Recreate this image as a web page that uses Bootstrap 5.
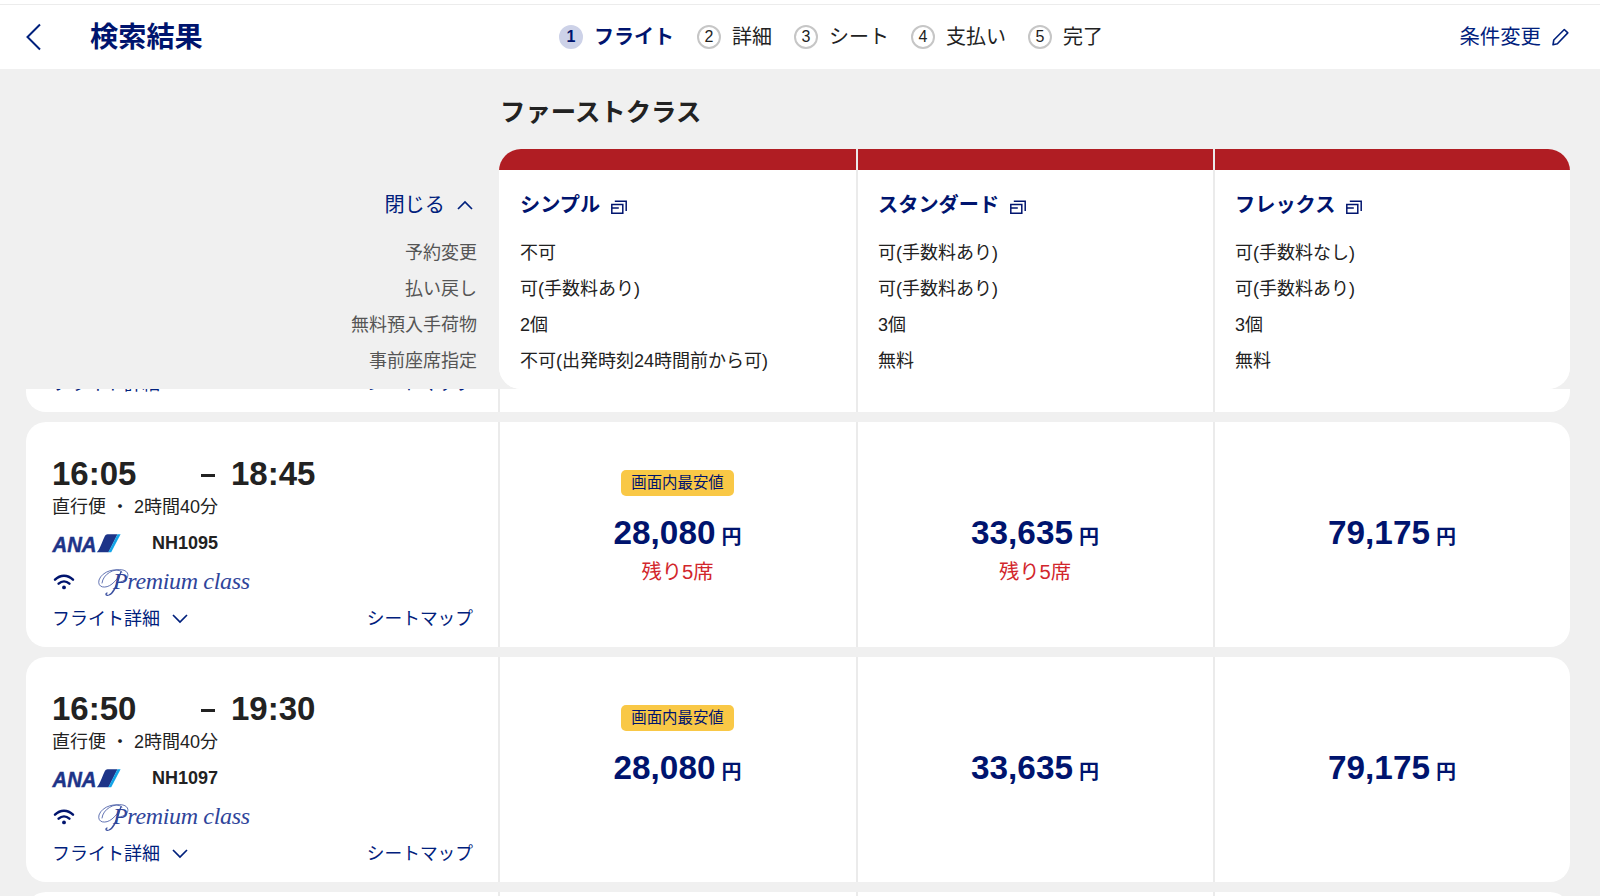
<!DOCTYPE html>
<html lang="ja">
<head>
<meta charset="utf-8">
<meta name="viewport" content="width=device-width, initial-scale=1">
<title>検索結果</title>
<link href="https://cdn.jsdelivr.net/npm/bootstrap@5.3.0/dist/css/bootstrap.min.css" rel="stylesheet">
<style>
:root{--navy:#00146e;--link-navy:#00207c;--line:#ebebeb;--page:#f0f0f0}
body{font-family:"Liberation Sans","Noto Sans CJK JP",sans-serif;background:var(--page);color:#222;height:896px;overflow:hidden;font-size:18px;line-height:1}
a{color:var(--link-navy);text-decoration:none}
svg{display:block;flex:none}
.ico{fill:none;stroke:currentColor}
.topline{height:5px;border-bottom:1px solid #ececec;background:#fff}
.appbar{height:64px;display:grid;grid-template-columns:559px 1fr auto;align-items:center;padding-right:31px}
.page-title{font-size:28.2px;font-weight:700;color:var(--navy);line-height:36px;margin:0 0 0 48px}
.steps{font-size:20px;line-height:28px;gap:22px}
.step{gap:11px}
.step-no{width:24px;height:24px;border:2px solid #c6c6c6;border-radius:50%;font-size:16px;line-height:20px;text-align:center}
.step.current{color:var(--navy);font-weight:700;margin-right:1px}
.step.current .step-no{background:#cdd2e8;border-color:#cdd2e8}
.edit{font-size:20.4px;line-height:28px;gap:11px}
.fares{height:320px;display:grid;grid-template-columns:499px 1fr;padding-right:30px}
.cabin{font-size:25.4px;font-weight:700;line-height:32px;padding:27px 0 21px 1px;margin:0}
.labels{padding:120px 22px 0 0;color:#555}
.fare-head{height:32px;line-height:32px;font-size:20.2px;margin-bottom:14px}
.toggle-icon{transform:rotate(180deg);margin-left:12px}
.cond{line-height:36.1px}
.fare-grid{display:grid;grid-template-columns:357px 357px 357px;height:240px;border-radius:22px;overflow:hidden;background:#fff}
.fare{background:linear-gradient(#b01d23 21px,#fff 21px);padding:40px 0 0 21px}
.fare + .fare{border-left:2px solid var(--line);padding-left:20px}
.fare .fare-head a{font-weight:700;color:var(--navy);gap:11px}
.results{height:507px;overflow:hidden;padding:0 30px 0 26px}
.results-inner{margin-top:-202px;gap:10px}
.flight{height:225px;flex:none;border-radius:20px;background:#fff;display:grid;grid-template-columns:472px 358px 357px 357px}
.flight > div + div{border-left:2px solid var(--line)}
.info{padding:32px 25px 0 26px}
.hidden-part{padding-bottom:16px}
.times{font-size:33px;font-weight:700;line-height:40px;height:40px}
.times .dep{width:149px}
.times .dash{width:14px;height:3px;background:#222;margin:3px 16px 0 0}
.kind{line-height:26px;margin-bottom:13px}
.carrier{height:20px}
.num{font-weight:700;margin-left:31px}
.amen{height:32px;margin:13px 0 9px 1px;color:var(--navy)}
.amen .klass{margin-left:22px}
.links{line-height:24px}
.links a{gap:12px}
.links a + a{font-size:17.7px}
.fare-cell{padding:48px 1px 0 0;text-align:center}
.tag{display:inline-block;width:113px;height:26px;border-radius:5px;background:#f9c846;color:var(--navy);font-size:15.4px;line-height:25px}
.tagrow{height:26px;margin-bottom:17px}
.price{font-size:33.3px;font-weight:700;color:var(--navy);line-height:40px;height:40px}
.price small{font-size:20px;margin-left:6px}
.left{color:#d2262c;font-size:20.3px;line-height:26px;margin-top:6px}
.carrier svg{overflow:visible}
.ana-word{font:italic 700 22.5px "Liberation Sans",sans-serif;fill:#1d3488;stroke:#1d3488;stroke-width:.5}
.klass-word{font:italic 24px "Liberation Serif",serif;fill:#2f459b}
.swash{fill:none;stroke:#3b50a0;stroke-width:.8;stroke-linecap:round}
</style>
</head>
<body>
<svg width="0" height="0" class="position-absolute" aria-hidden="true">
  <symbol id="windows" viewBox="0 0 16 14"><path d="M.8 4.500h11v8.700h-11zM.8 8h7M3.800 1.200h11.400V11" fill="none" stroke="currentColor" stroke-width="1.500"/></symbol>
  <symbol id="down" viewBox="0 0 16 10"><path d="M1 1l7 7 7-7" fill="none" stroke="currentColor" stroke-width="1.700"/></symbol>
  <symbol id="wifi" viewBox="0 0 22 16"><g fill="none" stroke="currentColor" stroke-width="2.500" stroke-linecap="round"><path d="M2 5.600c5.400-5.200 12.600-5.200 18 0M5.600 9.700c3.300-3 7.500-3 10.800 0"/></g><circle cx="11" cy="13.400" r="1.900" fill="currentColor"/></symbol>
  <symbol id="tail" viewBox="0 0 25 19"><path d="M.8 18.300C4.500 14.500 6.500 6.500 9 1.800Q9.700.300 11.500.300H21.500L12.500 18.300z" fill="#1d3488"/><path d="M21.500.300H24.600L15.200 18.300H12.300z" fill="#14a5e8"/></symbol>
  <symbol id="swash" viewBox="0 0 34 32"><g class="swash"><path d="M25 6C20 1 5 5 2 14c-2 8 7 9 13 4 5-4 8-9 9-12"/><path d="M5 17C6 8 17 2 26 4c8 2 6 11-4 12"/><path d="M24 6C21 13 19 26 12 29c-3 1-4-1-2-2" stroke-width="1.300"/></g></symbol>
</svg>

<header class="bg-white">
  <div class="topline"></div>
  <nav class="appbar">
    <div class="d-flex align-items-center ps-4">
      <a href="#" aria-label="戻る"><svg class="ico" width="18" height="28" viewBox="-1 0 18 28" stroke-width="2"><path d="M15 1.500L2.500 14 15 26.500"/></svg></a>
      <h1 class="page-title">検索結果</h1>
    </div>
    <div class="steps d-flex">
      <div class="step current d-flex align-items-center"><span class="step-no">1</span>フライト</div>
      <div class="step d-flex align-items-center"><span class="step-no">2</span>詳細</div>
      <div class="step d-flex align-items-center"><span class="step-no">3</span>シート</div>
      <div class="step d-flex align-items-center"><span class="step-no">4</span>支払い</div>
      <div class="step d-flex align-items-center"><span class="step-no">5</span>完了</div>
    </div>
    <a class="edit d-flex align-items-center" href="#">条件変更
      <svg class="ico" width="17" height="18" viewBox="0 0 17 18" stroke-width="1.600" stroke-linejoin="round"><path d="M1 16.800l.8-4.800L12.300 1.500l3.500 3.400L5.400 15.800z"/></svg></a>
  </nav>
</header>

<section class="fares">
  <div class="labels text-end">
    <div class="fare-head"><a href="#" class="d-inline-flex align-items-center me-1">閉じる<svg width="16" height="10" class="toggle-icon"><use href="#down"/></svg></a></div>
    <div class="cond">予約変更</div><div class="cond">払い戻し</div><div class="cond">無料預入手荷物</div><div class="cond">事前座席指定</div>
  </div>
  <div>
    <h2 class="cabin">ファーストクラス</h2>
    <div class="fare-grid">
      <div class="fare"><div class="fare-head"><a href="#" class="d-flex align-items-center">シンプル<svg width="16" height="14" class="mt-1"><use href="#windows"/></svg></a></div>
        <div class="cond">不可</div><div class="cond">可(手数料あり)</div><div class="cond">2個</div><div class="cond">不可(出発時刻24時間前から可)</div></div>
      <div class="fare"><div class="fare-head"><a href="#" class="d-flex align-items-center">スタンダード<svg width="16" height="14" class="mt-1"><use href="#windows"/></svg></a></div>
        <div class="cond">可(手数料あり)</div><div class="cond">可(手数料あり)</div><div class="cond">3個</div><div class="cond">無料</div></div>
      <div class="fare"><div class="fare-head"><a href="#" class="d-flex align-items-center">フレックス<svg width="16" height="14" class="mt-1"><use href="#windows"/></svg></a></div>
        <div class="cond">可(手数料なし)</div><div class="cond">可(手数料あり)</div><div class="cond">3個</div><div class="cond">無料</div></div>
    </div>
  </div>
</section>

<main class="results">
  <div class="results-inner d-flex flex-column">
    <article class="flight">
      <div class="info hidden-part d-flex flex-column justify-content-end">
        <div class="links d-flex justify-content-between"><a href="#" class="d-flex align-items-center">フライト詳細<svg width="16" height="10"><use href="#down"/></svg></a><a href="#">シートマップ</a></div>
      </div>
      <div></div><div></div><div></div>
    </article>

    <article class="flight">
      <div class="info">
        <div class="times d-flex align-items-center"><span class="dep">16:05</span><span class="dash"></span><span>18:45</span></div>
        <div class="kind">直行便 ・ 2時間40分</div>
        <div class="carrier d-flex align-items-center">
          <svg width="69" height="19"><text class="ana-word" x=".5" y="17.500" textLength="44" lengthAdjust="spacingAndGlyphs">ANA</text><use href="#tail" x="44" width="25" height="19"/></svg>
          <span class="num">NH1095</span></div>
        <div class="amen d-flex align-items-center"><svg width="22" height="16"><use href="#wifi"/></svg>
          <svg class="klass" width="156" height="32"><use href="#swash" width="34" height="32"/><text class="klass-word" x="16" y="22.500" textLength="137" lengthAdjust="spacing">Premium class</text></svg></div>
        <div class="links d-flex justify-content-between"><a href="#" class="d-flex align-items-center">フライト詳細<svg width="16" height="10"><use href="#down"/></svg></a><a href="#">シートマップ</a></div>
      </div>
      <div class="fare-cell"><div class="tagrow"><span class="tag">画面内最安値</span></div><div class="price">28,080<small>円</small></div><div class="left">残り5席</div></div>
      <div class="fare-cell"><div class="tagrow"></div><div class="price">33,635<small>円</small></div><div class="left">残り5席</div></div>
      <div class="fare-cell"><div class="tagrow"></div><div class="price">79,175<small>円</small></div></div>
    </article>

    <article class="flight">
      <div class="info">
        <div class="times d-flex align-items-center"><span class="dep">16:50</span><span class="dash"></span><span>19:30</span></div>
        <div class="kind">直行便 ・ 2時間40分</div>
        <div class="carrier d-flex align-items-center">
          <svg width="69" height="19"><text class="ana-word" x=".5" y="17.500" textLength="44" lengthAdjust="spacingAndGlyphs">ANA</text><use href="#tail" x="44" width="25" height="19"/></svg>
          <span class="num">NH1097</span></div>
        <div class="amen d-flex align-items-center"><svg width="22" height="16"><use href="#wifi"/></svg>
          <svg class="klass" width="156" height="32"><use href="#swash" width="34" height="32"/><text class="klass-word" x="16" y="22.500" textLength="137" lengthAdjust="spacing">Premium class</text></svg></div>
        <div class="links d-flex justify-content-between"><a href="#" class="d-flex align-items-center">フライト詳細<svg width="16" height="10"><use href="#down"/></svg></a><a href="#">シートマップ</a></div>
      </div>
      <div class="fare-cell"><div class="tagrow"><span class="tag">画面内最安値</span></div><div class="price">28,080<small>円</small></div></div>
      <div class="fare-cell"><div class="tagrow"></div><div class="price">33,635<small>円</small></div></div>
      <div class="fare-cell"><div class="tagrow"></div><div class="price">79,175<small>円</small></div></div>
    </article>

    <article class="flight"><div></div><div></div><div></div><div></div></article>
  </div>
</main>
<script src="https://cdn.jsdelivr.net/npm/bootstrap@5.3.0/dist/js/bootstrap.bundle.min.js"></script>
</body>
</html>
